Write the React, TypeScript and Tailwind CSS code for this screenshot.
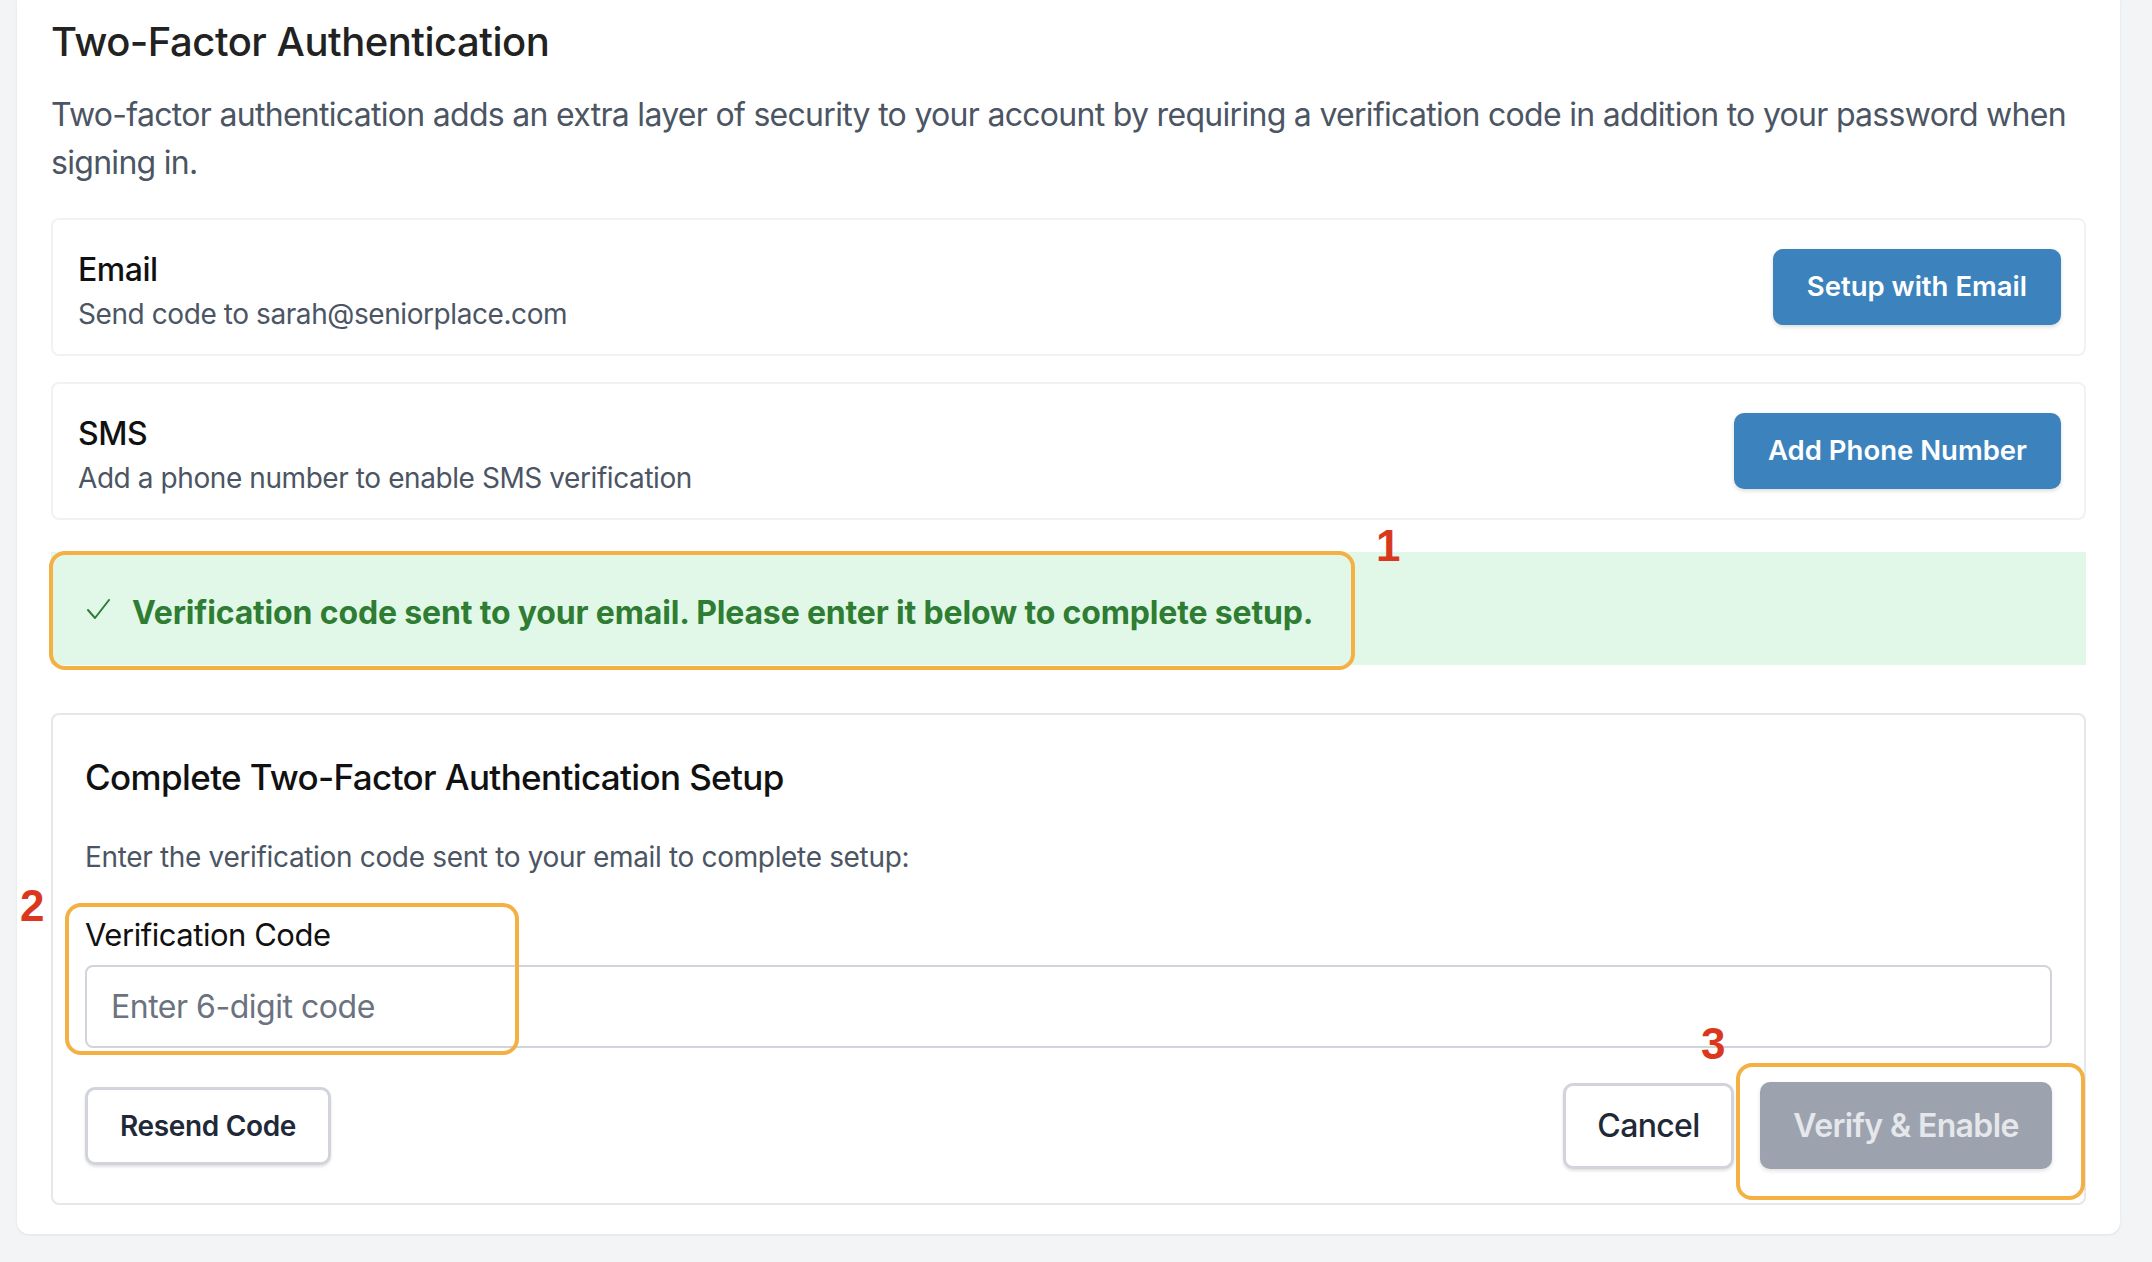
import React from 'react';

const MethodRow = ({ title, detail, action }: { title: string; detail: string; action: string }) => (
    <div className="flex items-center justify-between rounded-[8px] border-2 border-[#f1f2f4] py-[20px] pl-[25px] pr-[23px]">
        <div className="pt-[10px]">
            <div className="text-[32px] leading-[40px] font-medium tracking-[-0.015em] text-[#111111]">{title}</div>
            <div className="mt-[4px] text-[28px] leading-[40px] tracking-[-0.015em] text-[#4b5563]">{detail}</div>
        </div>
        <button className="h-[76px] rounded-[10px] bg-[#3c83be] px-[34px] text-[27.5px] font-semibold text-white shadow-[0_2px_4px_rgba(0,0,0,0.14)]">
            {action}
        </button>
    </div>
);

const Marker = ({ n, className }: { n: string; className: string }) => (
    <span className={`absolute font-['Liberation_Sans',Arial,sans-serif] text-[44px] leading-[44px] font-bold text-[#d9381e] ${className}`}>{n}</span>
);

export default function App() {
    return (
        <div className="relative min-h-screen w-full bg-[#f3f4f6] font-['Inter',sans-serif]">
            <div className="ml-[17px] mr-[32px] rounded-b-[12px] bg-white px-[34px] pt-[18px] pb-[29px] shadow-[0_1px_3px_rgba(0,0,0,0.08)]">
                <h2 className="text-[40px] leading-[48px] font-medium tracking-[-0.012em] text-[#222222]">Two-Factor Authentication</h2>
                <p className="mt-[25px] text-[32px] leading-[48px] tracking-[-0.022em] text-[#4b5563]">
                    Two-factor authentication adds an extra layer of security to your account by requiring a verification code in addition to your password when signing in.
                </p>

                <div className="mt-[31px] flex flex-col gap-[26px]">
                    <MethodRow title="Email" detail="Send code to sarah@seniorplace.com" action="Setup with Email" />
                    <MethodRow title="SMS" detail="Add a phone number to enable SMS verification" action="Add Phone Number" />
                </div>

                <div className="mt-[32px] flex h-[113px] items-center bg-[#e1f8e9] pl-[36px]">
                    <svg width="23" height="20" viewBox="0 0 23 20" fill="none" className="mr-[22px]">
                        <polyline points="1,11 8,19 22,1" stroke="#2e7d32" strokeWidth="2" strokeLinecap="round" strokeLinejoin="round" />
                    </svg>
                    <span className="pt-[8px] text-[32px] font-bold tracking-[-0.005em] text-[#2e7d32]">
                        Verification code sent to your email. Please enter it below to complete setup.
                    </span>
                </div>

                <div className="mt-[48px] rounded-[8px] border-2 border-[#e5e7eb] px-[32px] pt-[38px] pb-[34px]">
                    <h3 className="text-[35px] leading-[48px] font-medium tracking-[-0.018em] text-[#111111]">Complete Two-Factor Authentication Setup</h3>
                    <p className="mt-[36px] text-[28px] leading-[40px] tracking-[-0.012em] text-[#4b5563]">
                        Enter the verification code sent to your email to complete setup:
                    </p>
                    <label className="mt-[38px] block text-[31px] leading-[40px] tracking-[-0.015em] text-[#111111]">Verification Code</label>
                    <input
                        type="text"
                        placeholder="Enter 6-digit code"
                        className="mt-[10px] h-[83px] w-full rounded-[8px] border-2 border-[#d1d5db] px-[24px] text-[32px] tracking-[-0.015em] text-[#111111] placeholder:text-[#6b7280] outline-none"
                    />
                    <div className="mt-[34px] flex items-center justify-between">
                        <button className="h-[78px] w-[246px] rounded-[10px] border-[3px] border-[#d1d5db] bg-white text-[28px] font-semibold tracking-[-0.012em] text-[#1f2937] shadow-[0_2px_3px_rgba(0,0,0,0.12)]">
                            Resend Code
                        </button>
                        <div className="flex items-center gap-[26px]">
                            <button className="h-[86px] w-[171px] rounded-[10px] border-[3px] border-[#d1d5db] bg-white text-[32px] font-medium tracking-[-0.02em] text-[#1f2937] shadow-[0_2px_3px_rgba(0,0,0,0.12)]">
                                Cancel
                            </button>
                            <button className="h-[87px] w-[292px] rounded-[10px] bg-[#9ca3af] text-[32px] font-semibold tracking-[-0.02em] text-[#e5e7eb] shadow-[0_2px_4px_rgba(0,0,0,0.12)]">
                                Verify &amp; Enable
                            </button>
                        </div>
                    </div>
                </div>
            </div>

            {/* annotation outlines */}
            <div className="absolute left-[49px] top-[551px] h-[119px] w-[1306px] rounded-[16px] border-4 border-[#f4b043]" />
            <div className="absolute left-[65px] top-[903px] h-[152px] w-[454px] rounded-[16px] border-4 border-[#f4b043]" />
            <div className="absolute left-[1736px] top-[1063px] h-[137px] w-[349px] rounded-[16px] border-4 border-[#f4b043]" />
            <Marker n="1" className="left-[1376px] top-[524px]" />
            <Marker n="2" className="left-[20px] top-[884px]" />
            <Marker n="3" className="left-[1701px] top-[1022px]" />
        </div>
    );
}
